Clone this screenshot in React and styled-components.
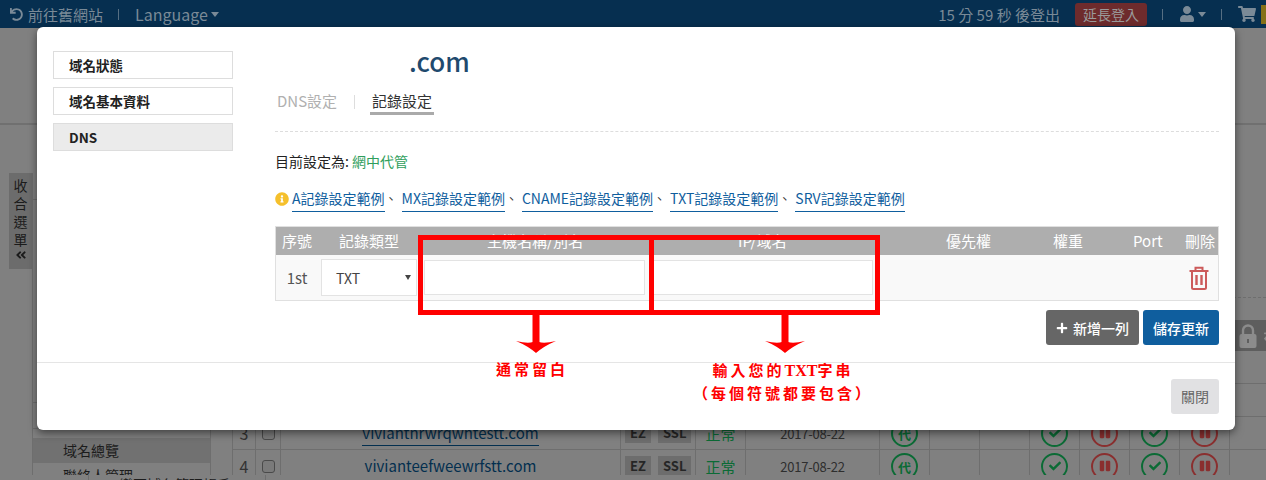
import React from "react";
import styled, { createGlobalStyle } from "styled-components";
import { FaCheck, FaPause, FaPlus, FaShoppingCart, FaUser, FaInfoCircle, FaUndo, FaAngleDoubleLeft, FaExchangeAlt } from "react-icons/fa";

const FONT = `"Noto Sans CJK TC", "Noto Sans", sans-serif`;

const GlobalStyle = createGlobalStyle`
  html, body {
    margin: 0;
    padding: 0;
    width: 1266px;
    height: 480px;
    overflow: hidden;
    background: #808080;
    font-family: ${FONT};
    font-size: 14px;
    color: #333;
  }
  * { box-sizing: border-box; }
`;

const records = ["A", "MX", "CNAME", "TXT", "SRV"];

const rows = [
  { no: 3, name: "vivianthrwrqwhtestt.com", underline: true },
  { no: 4, name: "vivianteefweewrfstt.com" },
];

const heads = [
  { label: "序號", w: 57 },
  { label: "記錄類型", w: 148 },
  { label: "主機名稱/別名", w: 251 },
  { label: "IP/域名", w: 208 },
  { label: "優先權", w: 107 },
  { label: "權重", w: 80 },
  { label: "Port", w: 52 },
  { label: "刪除", w: 30 },
];

const App = () => {
  return (
    <Page>
      <GlobalStyle />
      <TopBar>
        <BarGroup>
          <OldSite><FaUndo size={13} />前往舊網站</OldSite>
          <BarDivider />
          <Language>Language<Caret /></Language>
        </BarGroup>
        <BarGroup>
          <Timer>15 分 59 秒 後登出</Timer>
          <ExtendButton>延長登入</ExtendButton>
          <BarDivider />
          <UserMenu><FaUser size={16} /><Caret /></UserMenu>
          <BarDivider />
          <FaShoppingCart size={18} />
          <CartBadge />
        </BarGroup>
      </TopBar>

      <Behind>
        <TitleBand />
        <Content>
          <Collapse>收合選單<FaAngleDoubleLeft size={12} /></Collapse>
          <SideColumn>
            <SideHead />
            <SideBox />
            <SideItem $active>域名總覽</SideItem>
            <SideItem>聯絡人管理</SideItem>
          </SideColumn>
          <TableArea>
            <Toolbar />
            <TableHead>
              <LockIcon />
              <FaExchangeAlt size={14} />
            </TableHead>
            <TableRow />
            <TableRow />
            {rows.map((r) => (
              <TableRow key={r.no}>
                <NoCell>{r.no}</NoCell>
                <CheckCell><FakeCheck /></CheckCell>
                <NameCell><DomainLink $underline={r.underline}>{r.name}</DomainLink></NameCell>
                <TagCell><Tag>EZ</Tag><Tag>SSL</Tag></TagCell>
                <StatusCell>正常</StatusCell>
                <DateCell>2017-08-22</DateCell>
                <IconCell><Ring $color="#0b6b35">代</Ring></IconCell>
                <IconCell />
                <IconCell />
                <IconCell><Ring $color="#0b6b35"><FaCheck size={12} /></Ring></IconCell>
                <IconCell><Ring $color="#8a2f2f"><FaPause size={12} /></Ring></IconCell>
                <IconCell><Ring $color="#0b6b35"><FaCheck size={12} /></Ring></IconCell>
                <IconCell><Ring $color="#8a2f2f"><FaPause size={12} /></Ring></IconCell>
                <IconCell />
              </TableRow>
            ))}
          </TableArea>
        </Content>
        <BottomStrip>
          <StripCell>變更域名管理帳戶</StripCell>
        </BottomStrip>
      </Behind>

      <Modal>
        <ModalBody>
          <ModalSide>
            <ModalNav>域名狀態</ModalNav>
            <ModalNav>域名基本資料</ModalNav>
            <ModalNav $active>DNS</ModalNav>
          </ModalSide>
          <ModalMain>
            <DomainTitle>.com</DomainTitle>
            <Tabs>
              <Tab>DNS設定</Tab>
              <TabDivider />
              <Tab $active>記錄設定</Tab>
            </Tabs>
            <Current>目前設定為: <Managed>網中代管</Managed></Current>
            <Examples>
              <InfoIcon><FaInfoCircle size={14} /></InfoIcon>
              {records.map((r, i) => (
                <React.Fragment key={r}>
                  <ExampleLink>{r}記錄設定範例</ExampleLink>
                  {i < records.length - 1 && <Sep>、</Sep>}
                </React.Fragment>
              ))}
            </Examples>
            <DnsTable>
              <DnsHead>
                {heads.map((h) => (
                  <HeadCell key={h.label} $w={h.w}>{h.label}</HeadCell>
                ))}
              </DnsHead>
              <DnsRow>
                <RowNo>1st</RowNo>
                <TypeSelect>TXT<SelectCaret /></TypeSelect>
                <TextField />
                <TextField />
                <DeleteIcon>
                  <svg width="20" height="24" viewBox="0 0 20 24" fill="none" stroke="#cc5a5a" strokeWidth="2">
                    <path d="M6.5 5V1.8H13.5V5" />
                    <path d="M0.5 5H19.5" />
                    <path d="M3 5V21.5Q3 23 4.5 23H15.5Q17 23 17 21.5V5" />
                    <path d="M7.5 9V19M12.5 9V19" strokeWidth="2.4" />
                  </svg>
                </DeleteIcon>
              </DnsRow>
            </DnsTable>
            <Actions>
              <ActionButton $bg="#666666"><FaPlus size={12} />新增一列</ActionButton>
              <ActionButton $bg="#0f5e9e">儲存更新</ActionButton>
            </Actions>
          </ModalMain>
        </ModalBody>
        <ModalFooter>
          <CloseButton>關閉</CloseButton>
        </ModalFooter>
      </Modal>

      <Mark $x={418} $w={236} />
      <Mark $x={649} $w={231} />
      <Arrow $x={536}><ArrowDrawing /></Arrow>
      <Arrow $x={785}><ArrowDrawing /></Arrow>
      <Note $x={532} $y={359}>通常留白</Note>
      <Note $x={783} $y={359}>輸入您的<Latin>TXT</Latin>字串<br />（每個符號都要包含）</Note>
    </Page>
  );
};

const LockIcon = () => (
  <svg width="18" height="24" viewBox="0 0 18 24">
    <path d="M4 11V6.5a5 5 0 0 1 10 0V11" fill="none" stroke="#8c8c8c" strokeWidth="2.4" />
    <rect x="0.5" y="10" width="17" height="14" rx="2" fill="#8c8c8c" />
    <rect x="8" y="15" width="2" height="4" fill="#5e5e5e" />
  </svg>
);

const ArrowDrawing = () => (
  <svg width="40" height="46" viewBox="0 0 40 46">
    <rect x="16.5" y="0" width="7" height="30" fill="#ff0000" />
    <path d="M0 28 Q12 31 17 29 H23 Q28 31 40 28 Q28 33 20 40 Q12 33 0 28Z" fill="#ff0000" />
  </svg>
);

const Page = styled.div`
  position: relative;
  width: 1266px;
  height: 480px;
  overflow: hidden;
  background: #808080;
`;

const TopBar = styled.div`
  height: 28px;
  background: #062f50;
  color: #7a8a97;
  display: flex;
  justify-content: space-between;
  align-items: center;
  padding: 0 0 0 10px;
  font-size: 15px;
`;

const BarGroup = styled.div`
  display: flex;
  align-items: center;
`;

const OldSite = styled.div`
  display: flex;
  align-items: center;
  gap: 5px;
`;

const BarDivider = styled.span`
  width: 1px;
  height: 11px;
  margin: 0 16px 0 15px;
  background: #566f83;
`;

const Language = styled.div`
  display: flex;
  align-items: center;
  font-size: 16px;
`;

const Caret = styled.span`
  margin-left: 3px;
  border-left: 4.5px solid transparent;
  border-right: 4.5px solid transparent;
  border-top: 5px solid #7a8a97;
`;

const Timer = styled.div``;

const ExtendButton = styled.div`
  margin-left: 15px;
  width: 72px;
  height: 23px;
  line-height: 22px;
  text-align: center;
  background: #6e2b2c;
  border-radius: 3px;
  color: #9a9a9a;
  font-size: 14px;
`;

const UserMenu = styled.div`
  display: flex;
  align-items: center;
`;

const CartBadge = styled.span`
  width: 5px;
  height: 19px;
  margin-left: 5px;
  background: #857018;
`;

/* 彈窗後面的頁面 */
const Behind = styled.div`
  display: flex;
  flex-direction: column;
  height: 452px;
`;

const TitleBand = styled.div`
  height: 97px;
  border-bottom: 2px solid #707070;
`;

const Content = styled.div`
  display: flex;
  height: 350px;
  padding-left: 9px;
  overflow: hidden;
  flex-shrink: 0;
`;

const Collapse = styled.div`
  width: 23px;
  height: 96px;
  margin-top: 48px;
  padding-top: 3px;
  background: #6c6c6c;
  color: #1b1b1b;
  font-size: 14px;
  line-height: 18px;
  text-align: center;
  svg { margin: 1px auto 0; display: block; }
`;

const SideColumn = styled.div`
  width: 179px;
  margin-top: 48px;
  border-left: 1px solid #6e6e6e;
  border-right: 1px solid #6e6e6e;
  color: #1c1c1c;
  font-size: 14px;
`;

const SideHead = styled.div`
  height: 27px;
  border-bottom: 1px solid #6e6e6e;
`;

const SideBox = styled.div`
  height: 27px;
  margin: 202px 0 9px;
  border-top: 1px solid #6e6e6e;
  border-bottom: 1px solid #6e6e6e;
`;

const SideItem = styled.div`
  height: 25px;
  line-height: 25px;
  padding-left: 30px;
  background: ${(p) => (p.$active ? "#717171" : "transparent")};
`;

const TableArea = styled.div`
  width: 1034px;
  margin-left: 21px;
  flex-shrink: 0;
`;

const Toolbar = styled.div`
  height: 173px;
  border-bottom: 1px dashed #6e6e6e;
`;

const TableHead = styled.div`
  display: flex;
  align-items: center;
  gap: 7px;
  height: 31px;
  margin-top: 22px;
  padding-left: 1007px;
  background: #5e5e5e;
  color: #8c8c8c;
  overflow: hidden;
  svg { flex-shrink: 0; }
`;

const TableRow = styled.div`
  display: flex;
  height: 33px;
  border-bottom: 1px solid #6e6e6e;
  align-items: stretch;
`;

const Cell = styled.div`
  display: flex;
  flex-shrink: 0;
  align-items: center;
  justify-content: center;
  border-left: 1px solid #6e6e6e;
`;

const NoCell = styled(Cell)`
  width: 23px;
  font-size: 16px;
  color: #333;
`;

const CheckCell = styled(Cell)`
  width: 25px;
`;

const FakeCheck = styled.span`
  width: 13px;
  height: 13px;
  border: 1px solid #4a4a4a;
  border-radius: 3px;
  background: #7a7a7a;
`;

const NameCell = styled(Cell)`
  width: 340px;
`;

const DomainLink = styled.span`
  color: #032f4f;
  font-size: 15px;
  line-height: 24px;
  border-bottom: ${(p) => (p.$underline ? "1px solid #032f4f" : "0")};
`;

const TagCell = styled(Cell)`
  width: 75px;
  gap: 7px;
  justify-content: flex-start;
  padding-left: 4px;
`;

const Tag = styled.span`
  height: 20px;
  padding: 0 5px;
  line-height: 20px;
  background: #6d6d6d;
  font-size: 13px;
  font-weight: 700;
  color: #262626;
`;

const StatusCell = styled(Cell)`
  width: 50px;
  color: #0b6b35;
  font-size: 15px;
`;

const DateCell = styled(Cell)`
  width: 134px;
  color: #2e2e2e;
  font-size: 13px;
  letter-spacing: -0.2px;
`;

const IconCell = styled(Cell)`
  width: 50px;
`;

const Ring = styled.span`
  width: 27px;
  height: 27px;
  display: flex;
  align-items: center;
  justify-content: center;
  border: 2px solid ${(p) => p.$color};
  border-radius: 50%;
  color: ${(p) => p.$color};
  font-size: 13px;
  font-weight: 700;
`;

const BottomStrip = styled.div`
  height: 5px;
  padding-left: 88px;
  flex-shrink: 0;
`;

const StripCell = styled.div`
  width: 178px;
  height: 40px;
  padding-left: 30px;
  border-left: 1px solid #6e6e6e;
  border-right: 1px solid #6e6e6e;
  color: #1c1c1c;
  font-size: 14px;
  line-height: 18px;
  white-space: nowrap;
`;

const Modal = styled.div`
  position: absolute;
  left: 37px;
  top: 27px;
  width: 1198px;
  height: 403px;
  display: flex;
  flex-direction: column;
  background: #fff;
  border-radius: 6px;
  box-shadow: 0 3px 9px rgba(0, 0, 0, 0.5);
`;

const ModalBody = styled.div`
  height: 336px;
  display: flex;
  padding: 24px 16px 0;
  border-bottom: 1px solid #e5e5e5;
`;

const ModalSide = styled.div`
  width: 180px;
  display: flex;
  flex-direction: column;
  gap: 8px;
`;

const ModalNav = styled.div`
  height: 28px;
  line-height: 26px;
  padding-left: 15px;
  border: 1px solid #ddd;
  background: ${(p) => (p.$active ? "#ebebeb" : "#fff")};
  font-size: 13.5px;
  font-weight: 700;
  color: #222;
`;

const ModalMain = styled.div`
  width: 944px;
  margin-left: 42px;
`;

const DomainTitle = styled.div`
  height: 20px;
  padding-left: 134px;
  font-size: 26px;
  line-height: 20px;
  font-weight: 500;
  color: #1f4a6e;
`;

const Tabs = styled.div`
  display: flex;
  align-items: center;
  height: 43px;
  margin-top: 18px;
  padding-bottom: 16px;
  border-bottom: 1px dashed #ddd;
`;

const Tab = styled.div`
  height: 25px;
  line-height: 22px;
  padding: 0 2px;
  font-size: 15px;
  color: ${(p) => (p.$active ? "#333" : "#b0b0b0")};
  border-bottom: 3px solid ${(p) => (p.$active ? "#aaaaaa" : "transparent")};
`;

const TabDivider = styled.span`
  width: 1px;
  height: 14px;
  margin: 0 15px;
  background: #ddd;
`;

const Current = styled.div`
  margin-top: 19px;
  height: 20px;
  line-height: 20px;
  font-size: 14px;
  color: #222;
`;

const Managed = styled.span`
  color: #2f9e5c;
`;

const Examples = styled.div`
  display: flex;
  align-items: flex-start;
  margin-top: 16px;
  height: 27px;
`;

const InfoIcon = styled.span`
  width: 17px;
  padding-top: 3px;
  color: #f5c02c;
`;

const ExampleLink = styled.span`
  height: 25px;
  line-height: 22px;
  font-size: 14px;
  color: #0f5e9e;
  border-bottom: 1px solid #0f5e9e;
`;

const Sep = styled.span`
  width: 17px;
  font-size: 13px;
  line-height: 22px;
  color: #333;
`;

const DnsTable = styled.div`
  margin-top: 12px;
  border: 1px solid #e0e0e0;
`;

const DnsHead = styled.div`
  display: flex;
  height: 28px;
  padding-left: 6px;
  background: #aeaeae;
  color: #fff;
  font-size: 15px;
  line-height: 27px;
`;

const HeadCell = styled.div`
  width: ${(p) => p.$w}px;
  flex-shrink: 0;
  white-space: nowrap;
`;

const DnsRow = styled.div`
  display: flex;
  align-items: center;
  height: 45px;
  background: #f9f9f9;
`;

const RowNo = styled.div`
  width: 45px;
  padding-right: 3px;
  text-align: center;
  font-size: 15px;
  color: #555;
`;

const TypeSelect = styled.div`
  position: relative;
  width: 96px;
  height: 37px;
  line-height: 36px;
  padding-left: 14px;
  background: #fff;
  border: 1px solid #e3e3e3;
  font-size: 14px;
  color: #444;
`;

const SelectCaret = styled.span`
  position: absolute;
  right: 5px;
  top: 15px;
  border-left: 3px solid transparent;
  border-right: 3px solid transparent;
  border-top: 5px solid #444;
`;

const TextField = styled.div`
  width: 221px;
  height: 35px;
  margin-left: 7px;
  background: #fff;
  border: 1px solid #e3e3e3;
`;

const DeleteIcon = styled.span`
  margin-left: auto;
  margin-right: 9px;
  display: flex;
`;

const Actions = styled.div`
  display: flex;
  justify-content: flex-end;
  gap: 4px;
  margin-top: 9px;
`;

const ActionButton = styled.div`
  display: flex;
  align-items: center;
  gap: 5px;
  height: 35px;
  padding: 0 10px;
  background: ${(p) => p.$bg};
  border-radius: 3px;
  color: #fff;
  font-size: 14px;
  font-weight: 500;
`;

const ModalFooter = styled.div`
  flex: 1;
  display: flex;
  justify-content: flex-end;
  align-items: flex-start;
  padding: 16px 16px 0;
`;

const CloseButton = styled.div`
  width: 48px;
  height: 35px;
  line-height: 34px;
  text-align: center;
  background: #e1e1e3;
  border-radius: 3px;
  color: #666;
  font-size: 14px;
`;

/* 紅框標註 */
const Mark = styled.div`
  position: absolute;
  left: ${(p) => p.$x}px;
  top: 235px;
  width: ${(p) => p.$w}px;
  height: 80px;
  border: 5px solid #ff0000;
`;

const Arrow = styled.div`
  position: absolute;
  left: ${(p) => p.$x - 20}px;
  top: 313px;
  display: flex;
`;

const Note = styled.div`
  position: absolute;
  left: ${(p) => p.$x - 150}px;
  top: ${(p) => p.$y}px;
  width: 300px;
  text-align: center;
  font-family: "Liberation Serif", "Noto Sans CJK TC", serif;
  font-size: 15px;
  line-height: 23px;
  letter-spacing: 3px;
  font-weight: 700;
  color: #ff0000;
`;

const Latin = styled.span`
  font-size: 16px;
  letter-spacing: 0;
`;

export default App;
